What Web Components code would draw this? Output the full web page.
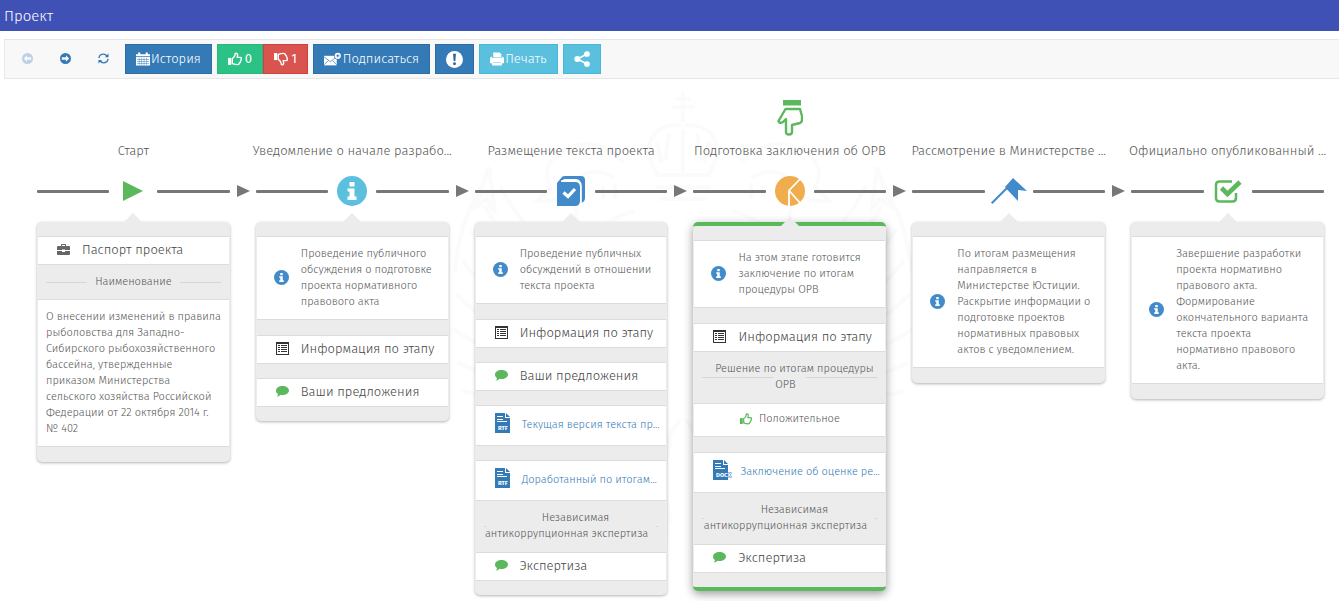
<!DOCTYPE html>
<html lang="ru">
<head>
<meta charset="utf-8">
<title>Проект</title>
<style>
  body { margin: 0; background: #fff; color: #555; font: 300 11px/16px "Fira Sans", "Noto Sans", sans-serif; overflow: hidden; }
</style>
</head>
<body>
<project-page>
  <page-header slot="header">Проект</page-header>
  <tool-bar slot="header">
    <nav-button icon="left" label="Назад" disabled></nav-button>
    <nav-button icon="right" label="Вперёд"></nav-button>
    <nav-button icon="refresh" label="Обновить"></nav-button>
    <tool-button tone="primary" icon="calendar">История</tool-button>
    <vote-group><tool-button tone="success" icon="up">0</tool-button><tool-button tone="danger" icon="down">1</tool-button></vote-group>
    <tool-button tone="primary" icon="mail">Подписаться</tool-button>
    <tool-button tone="primary" icon="alert" label="Важно"></tool-button>
    <tool-button tone="info" icon="print">Печать</tool-button>
    <tool-button tone="info" icon="share" label="Поделиться"></tool-button>
  </tool-bar>

  <stage-column heading="Старт" icon="play" tone="green">
    <stage-item icon="briefcase" joined>Паспорт проекта</stage-item>
    <stage-divider gap="93">Наименование</stage-divider>
    <stage-note plain>О внесении изменений в правила рыболовства для Западно-Сибирского рыбохозяйственного бассейна, утвержденные приказом Министерства<br>сельского хозяйства Российской Федерации от 22 октября 2014 г. №&nbsp;402</stage-note>
  </stage-column>

  <stage-column heading="Уведомление о начале разрабо..." icon="info" tone="cyan">
    <stage-note>Проведение публичного обсуждения о подготовке проекта нормативного правового акта</stage-note>
    <stage-item icon="list">Информация по этапу</stage-item>
    <stage-item icon="comment">Ваши предложения</stage-item>
  </stage-column>

  <stage-column heading="Размещение текста проекта" icon="book" tone="blue">
    <stage-note>Проведение публичных обсуждений в отношении текста проекта</stage-note>
    <stage-item icon="list">Информация по этапу</stage-item>
    <stage-item icon="comment">Ваши предложения</stage-item>
    <stage-file kind="RTF">Текущая версия текста пр...</stage-file>
    <stage-file kind="RTF" joined>Доработанный по итогам...</stage-file>
    <stage-divider multi gap="170">Независимая<br>антикоррупционная экспертиза</stage-divider>
    <stage-item icon="comment">Экспертиза</stage-item>
  </stage-column>

  <stage-column heading="Подготовка заключения об ОРВ" icon="pie" tone="orange" active>
    <stage-note>На этом этапе готовится заключение по итогам процедуры ОРВ</stage-note>
    <stage-item icon="list" joined>Информация по этапу</stage-item>
    <stage-divider multi gap="32">Решение по итогам процедуры<br>ОРВ</stage-divider>
    <stage-verdict>Положительное</stage-verdict>
    <stage-file kind="DOCX" joined>Заключение об оценке ре...</stage-file>
    <stage-divider multi gap="170">Независимая<br>антикоррупционная экспертиза</stage-divider>
    <stage-item icon="comment">Экспертиза</stage-item>
  </stage-column>

  <stage-column heading="Рассмотрение в Министерстве ..." icon="flag" tone="blue">
    <stage-note>По итогам размещения направляется в Министерстве Юстиции. Раскрытие информации о подготовке проектов нормативных правовых актов с уведомлением.</stage-note>
  </stage-column>

  <stage-column heading="Официально опубликованный ..." icon="done" tone="green" last>
    <stage-note>Завершение разработки проекта нормативно правового акта. Формирование окончательного варианта текста проекта нормативно правового акта.</stage-note>
  </stage-column>
</project-page>

<script>
const ICONS = {
  left: ['0 0 24 24', '<path fill-rule="evenodd" d="M12 0a12 12 0 1 0 0 24a12 12 0 0 0 0-24zM4 12l7-7v4.500h9v5h-9v4.500z"/>'],
  right: ['0 0 24 24', '<path fill-rule="evenodd" d="M12 0a12 12 0 1 0 0 24a12 12 0 0 0 0-24zM20 12l-7-7v4.500h-9v5h9v4.500z"/>'],
  refresh: ['0 0 24 24', '<g fill="none" stroke="currentColor" stroke-width="3"><path d="M2 11C3 5 8 2.500 12 2.500c4 0 6 2 8 4.500"/><path d="M22 13c-1 6-6 8.500-10 8.500-4 0-6-2-8-4.500"/></g><path d="M23 1v8h-8zM1 23v-8h8z"/>'],
  calendar: ['0 0 26 24', '<path d="M0 3h4V0h4v3h10V0h4v3h4v4H0z"/><path fill-rule="evenodd" d="M0 8.500h26V24H0zM2 12.500v1h22v-1zM2 16v1h22v-1zM2 19.500v1h22v-1z"/><path stroke="#337ab7" stroke-width=".8" d="M6 9v14M10.500 9v14M15 9v14M19.500 9v14"/>'],
  up: ['0 0 26 24', '<path d="M0 10h6v13H0z"/><path fill="none" stroke="currentColor" stroke-width="2.600" stroke-linejoin="round" d="M8 11c3-1 4-4 5-6 0-2 0-4 2-4 3 0 3.500 3 2 8h6c2.500 0 2 3 1 4 1 1 0 3-1 3.500 0 2-1 3-2 3 0 2-1 3-3 3-4 0-6-.5-10-2z"/>'],
  down: ['0 0 26 24', '<path d="M0 1h6v13H0z"/><path fill="none" stroke="currentColor" stroke-width="2.600" stroke-linejoin="round" d="M8 13c3 1 4 4 5 6 0 2 0 4 2 4 3 0 3.500-3 2-8h6c2.500 0 2-3 1-4 1-1 0-3-1-3.500 0-2-1-3-2-3 0-2-1-3-3-3-4 0-6 .5-10 2z"/>'],
  mail: ['0 0 32 24', '<path d="M0 6h24v18H0z"/><path stroke="#337ab7" stroke-width="1.300" fill="none" d="M0 23l8-8M24 23l-8-8M0 8l12 9 12-9"/><circle cx="26" cy="6" r="7" fill="#337ab7"/><circle cx="26" cy="6" r="5.800"/><path stroke="#337ab7" stroke-width="1.800" d="M26 3v6M23 6h6"/>'],
  alert: ['0 0 24 24', '<circle cx="12" cy="12" r="12"/><path fill="#2c6290" d="M10 4h4l-.8 10h-2.400z"/><circle cx="12" cy="18" r="2" fill="#2c6290"/>'],
  print: ['0 0 26 24', '<path d="M6 0h12l3 3v6H6z"/><path d="M3 8h1v2h18V8h1q3 0 3 3v9h-4v4H4v-4H0v-9q0-3 3-3z"/><path fill="#5bc0de" d="M6 18h14v1H6z"/>'],
  share: ['0 0 24 24', '<circle cx="5" cy="12" r="4.500"/><circle cx="19.500" cy="4.500" r="4.300"/><circle cx="19.500" cy="19.500" r="4.300"/><path fill="none" stroke="currentColor" stroke-width="2.500" d="M19 5L5 12l14 7"/>'],
  play: ['0 0 20 20', '<path d="M0 0l20 10L0 20z"/>'],
  info: ['0 0 30 30', '<circle cx="15" cy="15" r="15"/><path fill="#fff" d="M12.500 6h5v4.500h-5zM10.500 12.500h7v8h2V24h-9v-3.500h2v-5h-2z"/>'],
  book: ['0 0 28 30', '<path d="M0 30V7L5 1Q6 0 8 0h16q4 0 4 4v18q0 4-4 5V10Q24 3 19 3H7L4 6h14q5 0 5 5v14q0 5-5 5z"/><path fill="none" stroke="#fff" stroke-width="1.600" d="M4 5h15q5 0 5 5v18"/><path fill="none" stroke="#fff" stroke-width="3.200" d="M6.500 16.500l4.500 4L18 13"/>'],
  pie: ['0 0 30 30', '<circle cx="15" cy="15" r="15"/><path fill="none" stroke="#fff" stroke-width="1.800" d="M14 30V14.500L26 2M14 14.500L26 28"/>'],
  flag: ['0 0 36 26', '<path d="M14 9L22 0l14 13-9-1v11L16.500 12z"/><path fill="none" stroke="currentColor" stroke-width="2" d="M.7 25.300L17 9"/>'],
  done: ['0 0 28 24', '<path fill="none" stroke="currentColor" stroke-width="2.500" d="M18 2.500H5.500Q2 2.500 2 6v13q0 3.500 3.500 3.500h13q3.500 0 3.500-3.500v-5"/><path fill="none" stroke="currentColor" stroke-width="4.600" d="M7.500 9l6 6L26 3"/>'],
  hand: ['0 0 26 36', '<path d="M6 0h18v5.500H6z"/><path fill="none" stroke="currentColor" stroke-width="2.400" stroke-linejoin="round" d="M8.500 9L1.500 21q1 3 4.500 1L9 19v13q0 2.500 3 2.500t3-2.500v-7l8-2q2-1 2-3V16l-2-7z"/>'],
  briefcase: ['0 0 26 22', '<path fill-rule="evenodd" d="M8 4V1q0-1 1-1h8q1 0 1 1v3h6q2 0 2 2v6h-10v-1h-6v1H0V6q0-2 2-2zM10 4h6V2h-6z"/><path d="M0 14h10v2h6v-2h10v6q0 2-2 2H2q-2 0-2-2z"/>'],
  list: ['0 0 13 13', '<path fill-rule="evenodd" d="M0 0h13v13H0zM1 2v10h11V2z"/><path d="M2 3h2v1H2zM5 3h6v1H5zM2 5h2v1H2zM5 5h6v1H5zM2 7h2v1H2zM5 7h6v1H5zM2 9h2v1H2zM5 9h6v1H5z"/>'],
  comment: ['0 0 26 22', '<path d="M13 0C20 0 26 4 26 9s-6 9-13 9c-2 0-3 0-4-.4-2 2-5 4-8 3.400 2-1 3-3 3-5C1 14 0 12 0 9c0-5 6-9 13-9z"/>'],
};

const define = (name, html, setup) => {
  const template = document.createElement('template');
  template.innerHTML = html;
  customElements.define(name, class extends HTMLElement {
    constructor() {
      super();
      this.attachShadow({ mode: 'open' }).append(template.content.cloneNode(true));
    }
    connectedCallback() { if (setup) setup(this, this.shadowRoot); }
  });
};

define('ui-icon', `<style>
  :host { display: inline-block; flex: none; width: 14px; height: 14px; }
  svg { display: block; width: 100%; height: 100%; fill: currentColor; }
</style><svg aria-hidden="true"></svg>`, (host, root) => {
  const [box, body] = ICONS[host.getAttribute('name')];
  const svg = root.querySelector('svg');
  svg.setAttribute('viewBox', box);
  svg.innerHTML = body;
});

define('page-header', `<style>
  :host { display: block; background: #3f51b5; color: #fff; padding: 5px 4px 4px; }
  h1 { margin: 0; font: 300 15px/22px "Fira Sans", "Noto Sans", sans-serif; }
</style><h1><slot></slot></h1>`);

define('tool-bar', `<style>
  :host { display: flex; align-items: center; gap: 5px; margin: 8px 0 0 4px; padding: 4px 6px; border: 1px solid #e7e7e7; border-right: 0; background: #f8f8f8; }
</style><slot></slot>`);

define('nav-button', `<style>
  :host { display: block; color: #337ab7; }
  :host([disabled]) { opacity: .3; }
  button { display: flex; align-items: center; justify-content: center; width: 33px; height: 28px; padding: 0 0 2px; border: 0; background: none; color: inherit; }
  ui-icon { width: 11px; height: 11px; }
</style><button type="button"></button>`, (host, root) => {
  const button = root.querySelector('button');
  button.setAttribute('aria-label', host.getAttribute('label'));
  button.disabled = host.hasAttribute('disabled');
  button.innerHTML = `<ui-icon name="${host.getAttribute('icon')}"></ui-icon>`;
});

define('vote-group', `<style>:host { display: flex; --weight: 400; --gap: 3px; }</style><slot></slot>`);

define('tool-button', `<style>
  :host { display: block; --bg: #337ab7; --edge: #2e6da4; --size: 14px; }
  :host([tone=success]) { --bg: #2cc185; --edge: #28b67c; }
  :host([tone=danger]) { --bg: #d9534f; --edge: #d43f3a; }
  :host([tone=info]) { --bg: #5bc0de; --edge: #46b8da; }
  :host([icon=alert]) { --size: 17px; }
  :host([icon=share]) { --size: 16px; }
  :host([icon=mail]) { --width: 17px; --gap: 2px; }
  button { display: flex; align-items: center; justify-content: center; gap: var(--gap, 1px); height: 30px; padding: 0 10px; border: 1px solid var(--edge); background: var(--bg); color: #fff; font: var(--weight, 300) 13px/18px "Fira Sans", "Noto Sans", sans-serif; }
  ui-icon { width: var(--width, var(--size)); height: var(--size); }
</style><button type="button"><span></span><slot></slot></button>`, (host, root) => {
  const icon = document.createElement('ui-icon');
  icon.setAttribute('name', host.getAttribute('icon'));
  root.querySelector('span').replaceWith(icon);
  if (host.hasAttribute('label')) root.querySelector('button').setAttribute('aria-label', host.getAttribute('label'));
});

define('coat-watermark', `<style>
  :host { display: block; }
  svg { display: block; width: 100%; height: 100%; fill: none; stroke: #fbfbfb; stroke-width: 4; stroke-linecap: round; }
</style><svg viewBox="0 0 480 520" preserveAspectRatio="xMidYMin" aria-hidden="true">
  <defs><g id="half">
    <path d="M236 34q-32 0-30 32l8 18h24M226 44l-4 24M214 52l4 18M214 96h24M218 108h20"/>
    <path d="M180 70q-30-28-60-10-24 14-12 36l-14 14q20 2 30-8 14 20 8 40M170 86q-20-12-36 2M160 96v10M172 94v12M190 120q-30 10-50 30"/>
    <path d="M46 76l-14 40 12-8 8 14zM40 94Q16 130 12 180"/>
    <path d="M58 96Q74 130 100 150M42 116Q60 150 90 166M28 140Q50 176 80 190M20 170Q44 204 72 214M14 204Q40 230 66 238M10 238Q40 258 62 262M16 272Q40 284 60 288M20 300Q40 306 58 304"/>
    <path d="M180 180Q110 200 70 320M190 230Q130 250 90 350M200 280Q150 310 130 390M206 350Q170 370 160 430"/>
    <path d="M222 180v140M212 190q-10 60 6 120M236 330q-30 40-14 90 6 20-6 50M228 350q-14 40 0 80"/>
  </g></defs>
  <path d="M240 2v28M234 8h12M230 16h20M240 40v40"/>
  <use href="#half"/>
  <use href="#half" transform="translate(480 0) scale(-1 1)"/>
</svg>`);

define('project-page', `<style>
  :host { display: block; }
  main { position: relative; display: grid; grid-template-columns: repeat(6, minmax(0, 1fr)); align-items: start; gap: 26px; padding: 21px 15px 20px 37px; }
  coat-watermark { position: absolute; z-index: -1; top: 12px; left: 50%; width: 480px; height: 520px; margin-left: -227px; }
</style><slot name="header"></slot><main><coat-watermark></coat-watermark><slot></slot></main>`);

define('stage-column', `<style>
  :host { display: block; --tone: #428bca; --gray: #ececec; --green: #5cb85c; }
  :host([tone=green]) { --tone: var(--green); }
  :host([tone=cyan]) { --tone: #5bc0de; }
  :host([tone=orange]) { --tone: #f0ad4e; }
  .marker { height: 38px; display: flex; justify-content: center; color: var(--green); }
  .marker ui-icon { width: 26px; height: 36px; }
  h2 { display: flex; justify-content: center; margin: 4px 0 0; font: 300 13px/18px "Fira Sans", "Noto Sans", sans-serif; white-space: nowrap; }
  .track { position: relative; display: grid; grid-template-columns: 1fr 48px 1fr; align-items: center; height: 38px; margin-top: 12px; color: var(--tone); }
  .track i { height: 3px; background: #777; border-radius: 1px; }
  .track ui-icon { justify-self: center; width: 30px; height: 30px; }
  :host([icon=play]) .track ui-icon { width: 20px; height: 20px; }
  :host([icon=flag]) .track ui-icon { width: 36px; height: 26px; }
  :host([icon=done]) .track ui-icon { width: 28px; height: 24px; }
  .track::after { content: ""; position: absolute; left: 100%; top: 50%; margin: -6px 0 0 7px; border: 6px solid transparent; border-left: 13px solid #777; border-right: 0; }
  :host([last]) .track::after { display: none; }
  .card { position: relative; display: flow-root; margin-top: 12px; padding: 14px 0 0; border-radius: 5px; background: var(--gray); box-shadow: 0 1px 3px rgba(0, 0, 0, .3); }
  .card::before { content: ""; position: absolute; left: 50%; top: -9px; margin-left: -10px; border: 10px solid transparent; border-top: 0; border-bottom-color: var(--gray); }
  :host([active]) .card { border: solid var(--green); border-width: 4px 0; box-shadow: 0 3px 10px rgba(0, 0, 0, .4); }
</style>
<div class="marker"></div><h2></h2>
<div class="track"><i></i><span></span><i></i></div>
<div class="card"><slot></slot></div>`, (host, root) => {
  root.querySelector('h2').textContent = host.getAttribute('heading');
  const icon = document.createElement('ui-icon');
  icon.setAttribute('name', host.getAttribute('icon'));
  root.querySelector('.track span').replaceWith(icon);
  if (host.hasAttribute('active')) root.querySelector('.marker').innerHTML = '<ui-icon name="hand"></ui-icon>';
});

const ROW = `box-sizing: border-box; margin: 0 1px 14px; border: solid #dcdcdc; border-width: 1px 0; background: #fff;`;

define('stage-note', `<style>
  :host { display: flex; align-items: center; ${ROW} margin-bottom: 15px; padding: 9px 8px 9px 17px; }
  :host([plain]) { padding: 9px 4px 9px 8px; }
  :host([plain]) ui-icon { display: none; }
  ui-icon { width: 15px; height: 15px; margin: 0 12px 2px 0; color: #428bca; }
  p { margin: 0; }
</style><ui-icon name="info"></ui-icon><p><slot></slot></p>`);

define('stage-item', `<style>
  :host { display: block; ${ROW} }
  :host([joined]) { margin-bottom: 0; }
  button { display: flex; align-items: center; width: 100%; height: 27px; padding: 0 0 2px 19px; border: 0; background: none; color: #444; font: 300 13px/18px "Fira Sans", "Noto Sans", sans-serif; }
  ui-icon { width: 13px; height: 13px; margin-right: 12px; color: #5cb85c; }
  :host([icon=list]) ui-icon { color: #333; }
  :host([icon=briefcase]) ui-icon { color: #666; }
</style><button type="button"><span></span><slot></slot></button>`, (host, root) => {
  const icon = document.createElement('ui-icon');
  icon.setAttribute('name', host.getAttribute('icon'));
  root.querySelector('span').replaceWith(icon);
});

define('stage-file', `<style>
  :host { display: block; ${ROW} }
  :host([joined]) { margin-bottom: 0; }
  a { display: flex; align-items: center; height: 37px; padding: 0 7px 2px 18px; color: #337ab7; text-decoration: none; }
  svg { flex: none; width: 20px; height: 20px; margin: 0 8px 3px 0; overflow: visible; }
  text { font: 700 6px "Fira Sans", "Noto Sans", sans-serif; fill: #fff; stroke: #337ab7; stroke-width: 1px; paint-order: stroke; }
  span { white-space: nowrap; }
</style><a href="#"><svg viewBox="0 0 20 20" aria-hidden="true"><path fill="#337ab7" d="M1 0h10v5h5v15H1zM12 0l4 4h-4z"/><path stroke="#fff" d="M3 3.500h6M3 6.500h6M3 8.500h10"/><text x="4" y="17"></text></svg><span><slot></slot></span></a>`, (host, root) => {
  root.querySelector('text').textContent = host.getAttribute('kind');
});

define('stage-divider', `<style>
  :host { display: block; padding: 9px 0; text-align: center;
    background: linear-gradient(#d6d6d6, #d6d6d6) left 9px center / calc(50% - 9px - var(--gap) / 2) 1px no-repeat, linear-gradient(#d6d6d6, #d6d6d6) right 9px center / calc(50% - 9px - var(--gap) / 2) 1px no-repeat; }
  :host([multi]) { padding-bottom: 10px; }
  :host([multi]) p { padding-right: 9px; text-indent: 18px; }
  p { margin: 0; white-space: nowrap; }
</style><p><slot></slot></p>`, (host) => {
  host.style.setProperty('--gap', host.getAttribute('gap') + 'px');
});

define('stage-verdict', `<style>
  :host { display: flex; align-items: center; justify-content: center; gap: 7px; ${ROW} margin-bottom: 15px; padding-bottom: 2px; height: 34px; }
  ui-icon { width: 12px; height: 12px; color: #5cb85c; }
</style><ui-icon name="up"></ui-icon><slot></slot>`);
</script>
</body>
</html>
